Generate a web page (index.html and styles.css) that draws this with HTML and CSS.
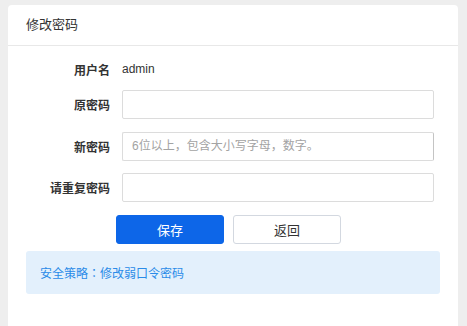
FILE: index.html
```html
<!DOCTYPE html>
<html lang="zh-CN">
<head>
<meta charset="utf-8">
<title>修改密码</title>
<link rel="stylesheet" href="styles.css">
</head>
<body>
<div class="card">
  <div class="card-header">修改密码</div>
  <div class="card-body">
    <div class="row row-text">
      <span class="label">用户名</span>
      <span class="value">admin</span>
    </div>
    <div class="row">
      <label class="label" for="old">原密码</label>
      <input class="input" id="old" type="password">
    </div>
    <div class="row">
      <label class="label" for="new">新密码</label>
      <input class="input input-focus" id="new" type="password" placeholder="6位以上，包含大小写字母，数字。">
    </div>
    <div class="row">
      <label class="label" for="rep">请重复密码</label>
      <input class="input" id="rep" type="password">
    </div>
    <div class="actions">
      <button class="btn btn-primary" type="button">保存</button>
      <button class="btn btn-default" type="button">返回</button>
    </div>
    <div class="notice">安全策略<span class="colon" lang="zh-TW">：</span>修改弱口令密码</div>
  </div>
</div>
</body>
</html>
```
FILE: styles.css
```css
html, body {
  margin: 0;
  padding: 0;
}
body {
  background: #eeeeee;
  font-family: "Liberation Sans", "Noto Sans CJK SC", sans-serif;
  color: #333;
  padding: 5px 9px 0 8px;
  height: 326px;
  box-sizing: border-box;
  overflow: hidden;
}
.card {
  background: #fff;
  border-radius: 4px 4px 0 0;
  height: 330px;
}
.card-header {
  height: 40px;
  line-height: 40px;
  padding-left: 18px;
  font-size: 13px;
  color: #333;
  border-bottom: 1px solid #e8e8e8;
}
.card-body {
  padding: 14px 18px 0 18px;
}
.row {
  display: flex;
  align-items: center;
  margin-bottom: 12.5px;
  margin-right: 6px;
}
.row-text {
  height: 18px;
  margin-bottom: 12px;
}
.label {
  width: 84px;
  flex: none;
  text-align: right;
  margin-right: 12px;
  font-size: 12px;
  font-weight: bold;
  color: #333;
}
.value {
  font-size: 12px;
  color: #333;
}
.input {
  flex: 1;
  height: 29px;
  box-sizing: border-box;
  border: 1px solid #dcdcdc;
  border-radius: 2px;
  padding: 0 9px;
  font-family: "Liberation Sans", "Noto Sans CJK SC", sans-serif;
  font-size: 12px;
  color: #333;
  outline: none;
  background: #fff;
}
.input-focus {
  border-right-color: #c4c4c4;
}
.input::placeholder {
  color: #a3a3a3;
}
.actions {
  display: flex;
  gap: 9px;
  padding-left: 90px;
  margin-top: 12.5px;
}
.btn {
  width: 108px;
  height: 29px;
  border-radius: 3px;
  font-family: "Liberation Sans", "Noto Sans CJK SC", sans-serif;
  font-size: 13px;
  cursor: pointer;
  padding: 0;
}
.btn-primary {
  background: #0d66e8;
  border: 1px solid #0d66e8;
  color: #fff;
}
.btn-default {
  background: #fff;
  border: 1px solid #d3d8e0;
  color: #333;
}
.notice {
  margin-top: 7px;
  height: 43px;
  line-height: 43px;
  background: #e3f0fc;
  border-radius: 3px;
  padding-left: 14px;
  font-size: 12px;
  color: #2a8be8;
}
.colon {
  font-family: "Noto Sans CJK TC", sans-serif;
}
```
